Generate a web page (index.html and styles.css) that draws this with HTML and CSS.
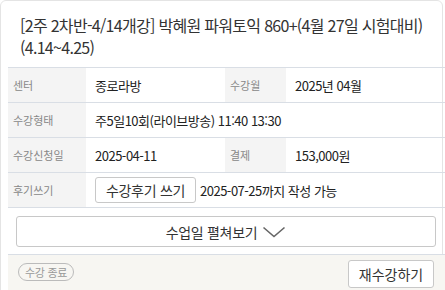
FILE: index.html
```html
<!DOCTYPE html>
<html lang="ko">
<head>
  <meta charset="UTF-8">
  <title>수강 내역</title>
  <link rel="stylesheet" href="styles.css">
</head>
<body>
  <div class="card">
    <div class="inner">
      <h2 class="title">[2주 2차반-4/14개강] 박혜원 파워토익 860+(4월 27일 시험대비)(4.14~4.25)</h2>
      <div class="info">
        <div class="row">
          <div class="label">센터</div>
          <div class="value">종로라방</div>
          <div class="label">수강월</div>
          <div class="value">2025년 04월</div>
        </div>
        <div class="row">
          <div class="label">수강형태</div>
          <div class="value wide">주5일10회(라이브방송) 11:40 13:30</div>
        </div>
        <div class="row">
          <div class="label">수강신청일</div>
          <div class="value">2025-04-11</div>
          <div class="label">결제</div>
          <div class="value">153,000원</div>
        </div>
        <div class="row">
          <div class="label">후기쓰기</div>
          <div class="value wide">
            <button class="btn review">수강후기 쓰기</button>
            <span>2025-07-25까지 작성 가능</span>
          </div>
        </div>
      </div>
      <div class="more-wrap">
        <button class="btn more">수업일 펼쳐보기
          <svg width="24" height="12" viewBox="0 0 24 12"><path d="M1.5 1.5 L12 10.5 L22.5 1.5" fill="none" stroke="#666" stroke-width="1.6"/></svg>
        </button>
      </div>
      <div class="footer">
        <span class="status">수강 종료</span>
        <button class="btn retake">재수강하기</button>
      </div>
    </div>
  </div>
</body>
</html>
```

FILE: styles.css
```css
body {
  margin: 0;
  font-family: "Noto Sans CJK KR", "Noto Sans", sans-serif;
  color: #222;
  background: #fff;
}
.card {
  width: 443px;
  height: 300px;
  border: 1px solid #e4e4e4;
  border-radius: 6px;
  box-sizing: border-box;
}
.inner {
  margin-left: 7px;
  width: 438px;
}
.title {
  margin: 0;
  padding: 13px 12px 9px;
  font-size: 16px;
  font-weight: normal;
  line-height: 22px;
  letter-spacing: -0.7px;
  word-break: keep-all;
  color: #333;
}
.info {
  border-top: 1px solid #d9dee5;
}
.row {
  display: grid;
  grid-template-columns: 78px 139px 61px 1fr;
  height: 35px;
  border-bottom: 1px solid #d9dee5;
  box-sizing: border-box;
}
.label {
  background: #f4f4f4;
  color: #888;
  font-size: 11px;
  padding-left: 5px;
  display: flex;
  align-items: center;
}
.value {
  font-size: 13px;
  letter-spacing: -0.5px;
  padding-left: 9px;
  display: flex;
  align-items: center;
}
.value.wide {
  grid-column: 2 / 5;
}
.btn {
  font-family: inherit;
  background: #fff;
  border: 1px solid #c8c8c8;
  border-radius: 3px;
  color: #333;
  cursor: pointer;
}
.review {
  width: 101px;
  height: 26px;
  font-size: 14px;
  letter-spacing: -0.3px;
  padding: 0;
  margin-right: 4px;
}
.more-wrap {
  padding: 8px 10px 7px 8px;
  border-bottom: 1px solid #d9dee5;
}
.more {
  width: 100%;
  height: 31px;
  font-size: 14px;
  letter-spacing: -0.3px;
  display: flex;
  align-items: center;
  justify-content: center;
  gap: 5px;
}
.footer {
  background: #f7f6f2;
  display: flex;
  justify-content: space-between;
  align-items: flex-start;
  padding: 5px 12px 4px 10px;
  height: 40px;
  box-sizing: border-box;
}
.status {
  margin-top: 3px;
  border: 1px solid #bbb;
  border-radius: 10px;
  color: #999;
  font-size: 11px;
  letter-spacing: -0.3px;
  padding: 0 6px;
  line-height: 16px;
}
.retake {
  width: 86px;
  height: 28px;
  font-size: 14px;
  padding: 0;
}
```
